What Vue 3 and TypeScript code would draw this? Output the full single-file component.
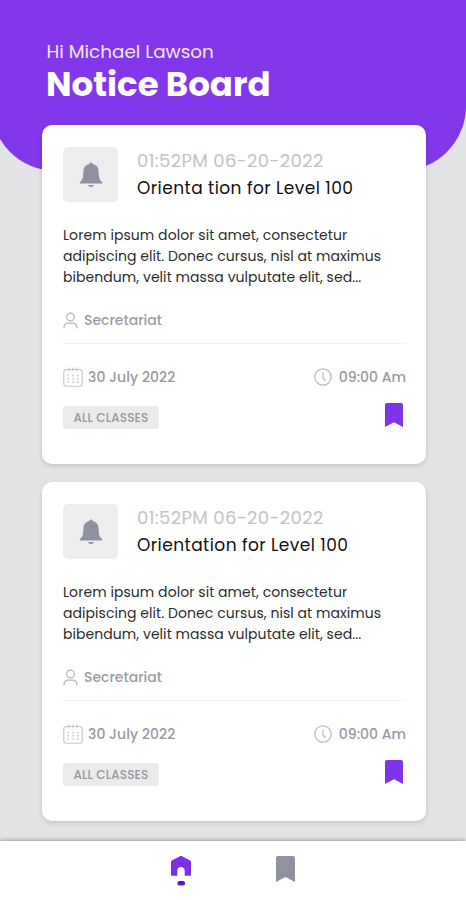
<script setup lang="ts">
interface Notice {
  id: number
  stamp: string
  title: string
  body: string[]
  author: string
  date: string
  time: string
  tag: string
}

const body = [
  'Lorem ipsum dolor sit amet, consectetur',
  'adipiscing elit. Donec cursus, nisl at maximus',
  'bibendum, velit massa vulputate elit, sed...',
]

const shared = {
  stamp: '01:52PM 06-20-2022',
  body,
  author: 'Secretariat',
  date: '30 July 2022',
  time: '09:00 Am',
  tag: 'ALL CLASSES',
}

const notices: Notice[] = [
  { id: 1, title: 'Orienta tion for Level 100', ...shared },
  { id: 2, title: 'Orientation for Level 100', ...shared },
]
</script>

<template>
  <div class="screen">
    <header class="hero">
      <p class="greeting">Hi Michael Lawson</p>
      <h1 class="heading">Notice Board</h1>
    </header>

    <main class="list">
      <article v-for="n in notices" :key="n.id" class="card">
        <div class="top">
          <div class="badge">
            <svg width="24" height="26" viewBox="0 0 24 26">
              <path fill="#8f919f" d="M12 .6c.9 0 1.500.6 1.600 1.500 4 .8 5.900 3.600 6 7.200.1 5.100.5 8.900 3.600 10.800v1.300H.8v-1.300c3.100-1.900 3.500-5.700 3.600-10.800.1-3.600 2-6.400 6-7.200C10.500 1.200 11.100.6 12 .6zM9 22.900h6c-.4 1.300-1.500 2-3 2s-2.600-.7-3-2z" />
            </svg>
          </div>
          <div class="titles">
            <p class="stamp">{{ n.stamp }}</p>
            <h2 class="title">{{ n.title }}</h2>
          </div>
        </div>

        <p class="body">
          <span v-for="(line, i) in n.body" :key="i" class="line">{{ line }}</span>
        </p>

        <div class="author">
          <svg width="15" height="17" viewBox="0 0 15 17" fill="none" stroke="#b5b6ba" stroke-width="1.200" stroke-linecap="round">
            <circle cx="7.500" cy="5" r="3.900" />
            <path d="M1 16c0-3 1.700-4.900 4.500-4.900h4c2.800 0 4.500 1.900 4.500 4.900" />
          </svg>
          <span class="name">{{ n.author }}</span>
        </div>

        <div class="when">
          <svg width="20" height="20" viewBox="0 0 20 20" fill="none" stroke="#c6c7ca" stroke-linecap="round">
            <rect x=".8" y="2.500" width="18.400" height="16.700" rx="2.500" stroke-width="1.100" />
            <path d="M6 .8v3M10 .8v3M14 .8v3" stroke-width="1.200" />
            <path d="M4.300 8.500h1.600M9.200 8.500h1.600M14.100 8.500h1.600M4.300 11.800h1.600M9.200 11.800h1.600M14.100 11.800h1.600M4.300 15h1.600M9.200 15h1.600M14.100 15h1.600" stroke-width="1.500" stroke-linecap="butt" />
          </svg>
          <span class="date">{{ n.date }}</span>
          <svg class="clock" width="18" height="18" viewBox="0 0 18 18" fill="none" stroke="#bbbcbf" stroke-width="1.200" stroke-linecap="round" stroke-linejoin="round">
            <circle cx="9" cy="9" r="8.200" />
            <path d="M9 4.500V10l2.200 2.700" />
          </svg>
          <span class="time">{{ n.time }}</span>
        </div>

        <div class="foot">
          <span class="tag">{{ n.tag }}</span>
          <svg class="mark" width="18" height="24" viewBox="0 0 18 24">
            <path fill="#8034ea" d="M2 0h14c1.100 0 2 .8 2 1.900V24l-9-4.700L0 24V1.900C0 .8.900 0 2 0z" />
          </svg>
        </div>
      </article>
    </main>

    <nav class="nav">
      <svg width="22" height="31" viewBox="0 0 22 31">
        <path fill="#7b2fe7" d="M9.600.4c.9-.5 1.900-.5 2.800 0l7.400 3.900c.8.400 1.200 1 1.200 1.900v12.500c0 .7-.4 1-1 1h-5.300v-5.200c0-2.100-1.400-3.600-3.700-3.600s-3.700 1.500-3.700 3.600v5.200H2c-.6 0-1-.3-1-1V6.200c0-.9.400-1.500 1.200-1.900z" />
        <rect x="7.500" y="25" width="7.500" height="4.500" rx="1.800" fill="#6112ce" />
      </svg>
      <svg width="19" height="26" viewBox="0 0 19 26">
        <path fill="#90929f" d="M2 0h15c1.100 0 2 .8 2 1.900V26l-9.500-5L0 26V1.900C0 .8.900 0 2 0z" />
      </svg>
    </nav>
  </div>
</template>

<style>
body {
  margin: 0;
}
</style>

<style scoped>
.screen {
  display: flex;
  flex-direction: column;
  height: 900px;
  overflow: hidden;
  background: #e2e4e5;
  color: #111;
  font-family: Poppins, Inter, sans-serif;
}
p,
h1,
h2 {
  margin: 0;
  white-space: nowrap;
}
.hero {
  box-sizing: border-box;
  flex: none;
  width: 475px;
  height: 171px;
  margin-left: -9px;
  padding: 38px 0 0 55px;
  border-radius: 0 0 65px 65px;
  background: #8238ea;
  color: #fff;
}
.greeting {
  padding-left: 0.5px;
  color: #f1e6ff;
  font-size: 18.4px;
  line-height: 27px;
}
.heading {
  font-size: 34px;
  font-weight: 700;
  line-height: 38px;
}
.list {
  display: flex;
  flex-direction: column;
  flex: none;
  gap: 18.5px;
  height: 716px;
  margin: -46px 40px 0 42px;
}
.card {
  box-sizing: border-box;
  flex: none;
  height: 338.5px;
  padding: 22px 20px 0 21px;
  border-radius: 10px;
  background: #fff;
  box-shadow: 0 2px 5px rgba(0, 0, 0, 0.14);
}
.top {
  display: flex;
  gap: 19px;
}
.badge {
  display: flex;
  align-items: center;
  justify-content: center;
  width: 55px;
  height: 55px;
  border-radius: 5px;
  background: #ededee;
}
.stamp {
  color: #c3c3c4;
  font-size: 18px;
  letter-spacing: 0.38px;
  line-height: 27px;
}
.title {
  margin-top: 1px;
  font-size: 17px;
  font-weight: 400;
  letter-spacing: 0.44px;
  line-height: 27px;
}
.body {
  margin-top: 23px;
  color: #2c2c2c;
  font-size: 14px;
  letter-spacing: 0.06px;
  line-height: 21px;
}
.line {
  display: block;
  width: max-content;
}
.author {
  display: flex;
  align-items: center;
  gap: 6px;
  height: 22px;
  margin-top: 21px;
  padding-bottom: 12px;
  border-bottom: 1px solid #f2f2f3;
  color: #9b9ca1;
  font-size: 14px;
  font-weight: 500;
}
.when {
  display: flex;
  align-items: center;
  height: 22px;
  margin-top: 22px;
  color: #999aa0;
  font-size: 14px;
  font-weight: 500;
  white-space: nowrap;
}
.date {
  margin-left: 5px;
  letter-spacing: 0.06px;
}
.clock {
  margin-left: auto;
}
.time {
  margin-left: 7px;
}
.foot {
  display: flex;
  justify-content: space-between;
  align-items: flex-start;
  margin-top: 15px;
  padding-right: 3px;
}
.tag {
  box-sizing: border-box;
  width: 96px;
  height: 23px;
  margin-top: 3px;
  border-radius: 2px;
  background: #ebebec;
  color: #96979b;
  font-size: 12px;
  font-weight: 500;
  letter-spacing: 0.15px;
  line-height: 24px;
  text-align: center;
}
.nav {
  display: flex;
  flex: none;
  gap: 84px;
  height: 59px;
  padding: 15px 0 0 170px;
  background: #fff;
  box-shadow: 0 -1px 4px rgba(0, 0, 0, 0.3);
}
</style>
